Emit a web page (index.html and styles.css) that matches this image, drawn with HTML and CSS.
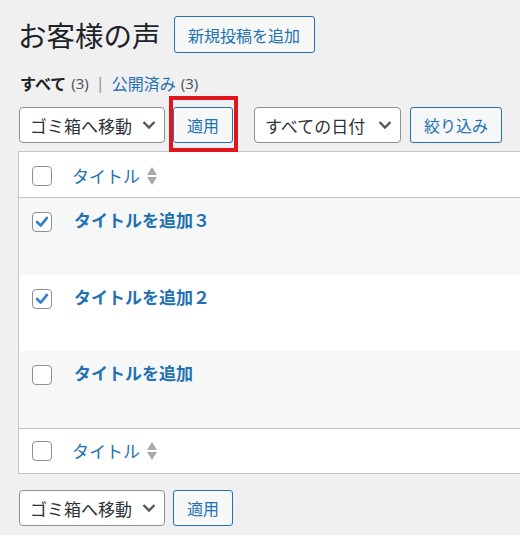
FILE: index.html
```html
<!DOCTYPE html>
<html lang="ja">
<head>
<meta charset="utf-8">
<link rel="stylesheet" href="styles.css">
</head>
<body>
<div class="page">
  <div class="head">
    <h1 class="title">お客様の声</h1>
    <span class="btn btn-new">新規投稿を追加</span>
  </div>
  <div class="subsub">
    <span class="current">すべて</span> <span class="count">(3)</span>
    <span class="sep">|</span>
    <span class="link">公開済み</span> <span class="count">(3)</span>
  </div>
  <div class="tablenav top">
    <div class="select sel-bulk"><span>ゴミ箱へ移動</span><svg class="chev" viewBox="0 0 14 10" width="14" height="10"><path d="M1.5 2 L7 7.5 L12.5 2" fill="none" stroke="#50575e" stroke-width="2.4"/></svg></div>
    <div class="hl"><span class="btn btn-apply">適用</span></div>
    <div class="select sel-date"><span>すべての日付</span><svg class="chev" viewBox="0 0 14 10" width="14" height="10"><path d="M1.5 2 L7 7.5 L12.5 2" fill="none" stroke="#50575e" stroke-width="2.4"/></svg></div>
    <span class="btn btn-filter">絞り込み</span>
  </div>
  <div class="table">
    <div class="row thead">
      <span class="cb"></span>
      <span class="col-title">タイトル</span>
      <span class="sort"><span class="up"></span><span class="down"></span></span>
    </div>
    <div class="row item alt">
      <span class="cb checked"><svg viewBox="0 0 20 20" width="18" height="18"><path d="M4.5 10 L8.5 14 L15.5 5.5" fill="none" stroke="#3582c4" stroke-width="3" stroke-linecap="round" stroke-linejoin="round"/></svg></span>
      <span class="row-title">タイトルを追加３</span>
    </div>
    <div class="row item">
      <span class="cb checked"><svg viewBox="0 0 20 20" width="18" height="18"><path d="M4.5 10 L8.5 14 L15.5 5.5" fill="none" stroke="#3582c4" stroke-width="3" stroke-linecap="round" stroke-linejoin="round"/></svg></span>
      <span class="row-title">タイトルを追加２</span>
    </div>
    <div class="row item alt">
      <span class="cb"></span>
      <span class="row-title">タイトルを追加</span>
    </div>
    <div class="row tfoot">
      <span class="cb"></span>
      <span class="col-title">タイトル</span>
      <span class="sort"><span class="up"></span><span class="down"></span></span>
    </div>
  </div>
  <div class="tablenav bottom">
    <div class="select sel-bulk"><span>ゴミ箱へ移動</span><svg class="chev" viewBox="0 0 14 10" width="14" height="10"><path d="M1.5 2 L7 7.5 L12.5 2" fill="none" stroke="#50575e" stroke-width="2.4"/></svg></div>
    <span class="btn btn-apply">適用</span>
  </div>
</div>
</body>
</html>
```
FILE: styles.css
```css
html, body {
  margin: 0;
  padding: 0;
  background: #f0f0f1;
  overflow: hidden;
}
body {
  font-family: "Noto Sans", "Noto Sans CJK JP", sans-serif;
  color: #1d2327;
  width: 520px;
  height: 535px;
}
.page {
  padding: 16px 0 0 18px;
}
.head {
  display: flex;
  align-items: center;
  gap: 13px;
  height: 37px;
}
.title {
  margin: 0;
  font-size: 28.5px;
  font-weight: 400;
  line-height: 37px;
  font-family: "Noto Sans CJK JP", sans-serif;
}
.btn {
  display: inline-flex;
  align-items: center;
  justify-content: center;
  box-sizing: border-box;
  border: 1px solid #2271b1;
  border-radius: 3px;
  background: #f6f7f7;
  color: #2271b1;
  font-family: "Noto Sans CJK JP", sans-serif;
  font-size: 16px;
  height: 37px;
  padding: 0 13px;
}
.btn-new {
  width: 141px;
}
.subsub {
  margin-top: 20px;
  height: 20px;
  line-height: 20px;
  font-size: 16px;
  display: flex;
  align-items: center;
  gap: 5px;
  padding-left: 2px;
}
.subsub .current {
  font-weight: 700;
  font-family: "Noto Sans CJK JP", sans-serif;
  color: #1d2327;
}
.subsub .count {
  color: #50575e;
  font-size: 15px;
}
.subsub .sep {
  color: #8c8f94;
  margin: 0 2px;
}
.subsub .link {
  color: #2271b1;
  font-family: "Noto Sans CJK JP", sans-serif;
}
.tablenav {
  display: flex;
  align-items: center;
  height: 36px;
}
.tablenav.top {
  margin-top: 14px;
}
.tablenav.bottom {
  margin-top: 16px;
}
.select {
  box-sizing: border-box;
  height: 36px;
  border: 1px solid #8c8f94;
  border-radius: 4px;
  background: #fff;
  display: flex;
  align-items: center;
  justify-content: space-between;
  padding: 0 8px 0 10px;
  font-family: "Noto Sans CJK JP", sans-serif;
  font-size: 17px;
  color: #2c3338;
}
.chev {
  display: block;
}
.sel-bulk {
  width: 146px;
  margin-left: 1px;
}
.sel-date {
  width: 147px;
  margin-left: 21px;
}
.btn-apply {
  width: 60px;
  height: 36px;
  margin-left: 8px;
}
.hl {
  position: relative;
  display: flex;
}
.hl::after {
  content: "";
  position: absolute;
  left: 4px;
  right: -5px;
  top: -11px;
  bottom: -9px;
  border: 4px solid #e0161c;
  pointer-events: none;
}
.btn-filter {
  width: 92px;
  height: 36px;
  margin-left: 9px;
}
.table {
  margin-top: 8px;
  width: 502px;
  box-sizing: border-box;
  border: 1px solid #c3c4c7;
  border-right: none;
  background: #fff;
}
.row {
  display: flex;
  align-items: flex-start;
  box-sizing: border-box;
  padding-left: 13px;
}
.thead {
  height: 46px;
  border-bottom: 1px solid #c3c4c7;
  padding-top: 14px;
}
.tfoot {
  height: 45px;
  border-top: 1px solid #c3c4c7;
  padding-top: 12px;
}
.item {
  height: 76px;
  padding-top: 14px;
  background: #fff;
}
.item.alt {
  height: 77px;
  background: #f6f7f7;
}
.cb {
  box-sizing: border-box;
  width: 20px;
  height: 20px;
  border: 1px solid #8c8f94;
  border-radius: 4px;
  background: #fff;
  display: flex;
  align-items: center;
  justify-content: center;
  flex: none;
}
.col-title {
  margin-left: 20px;
  font-family: "Noto Sans CJK JP", sans-serif;
  font-size: 17px;
  line-height: 20px;
  color: #2271b1;
}
.row-title {
  margin-left: 22px;
  font-family: "Noto Sans CJK JP", sans-serif;
  font-size: 17px;
  font-weight: 700;
  line-height: 16px;
  color: #2271b1;
}
.sort {
  display: flex;
  flex-direction: column;
  gap: 2px;
  margin-left: 7px;
  margin-top: 1px;
}
.sort .up {
  width: 0;
  height: 0;
  border-left: 5px solid transparent;
  border-right: 5px solid transparent;
  border-bottom: 8px solid #a7aaad;
}
.sort .down {
  width: 0;
  height: 0;
  border-left: 5px solid transparent;
  border-right: 5px solid transparent;
  border-top: 8px solid #a7aaad;
}
```
